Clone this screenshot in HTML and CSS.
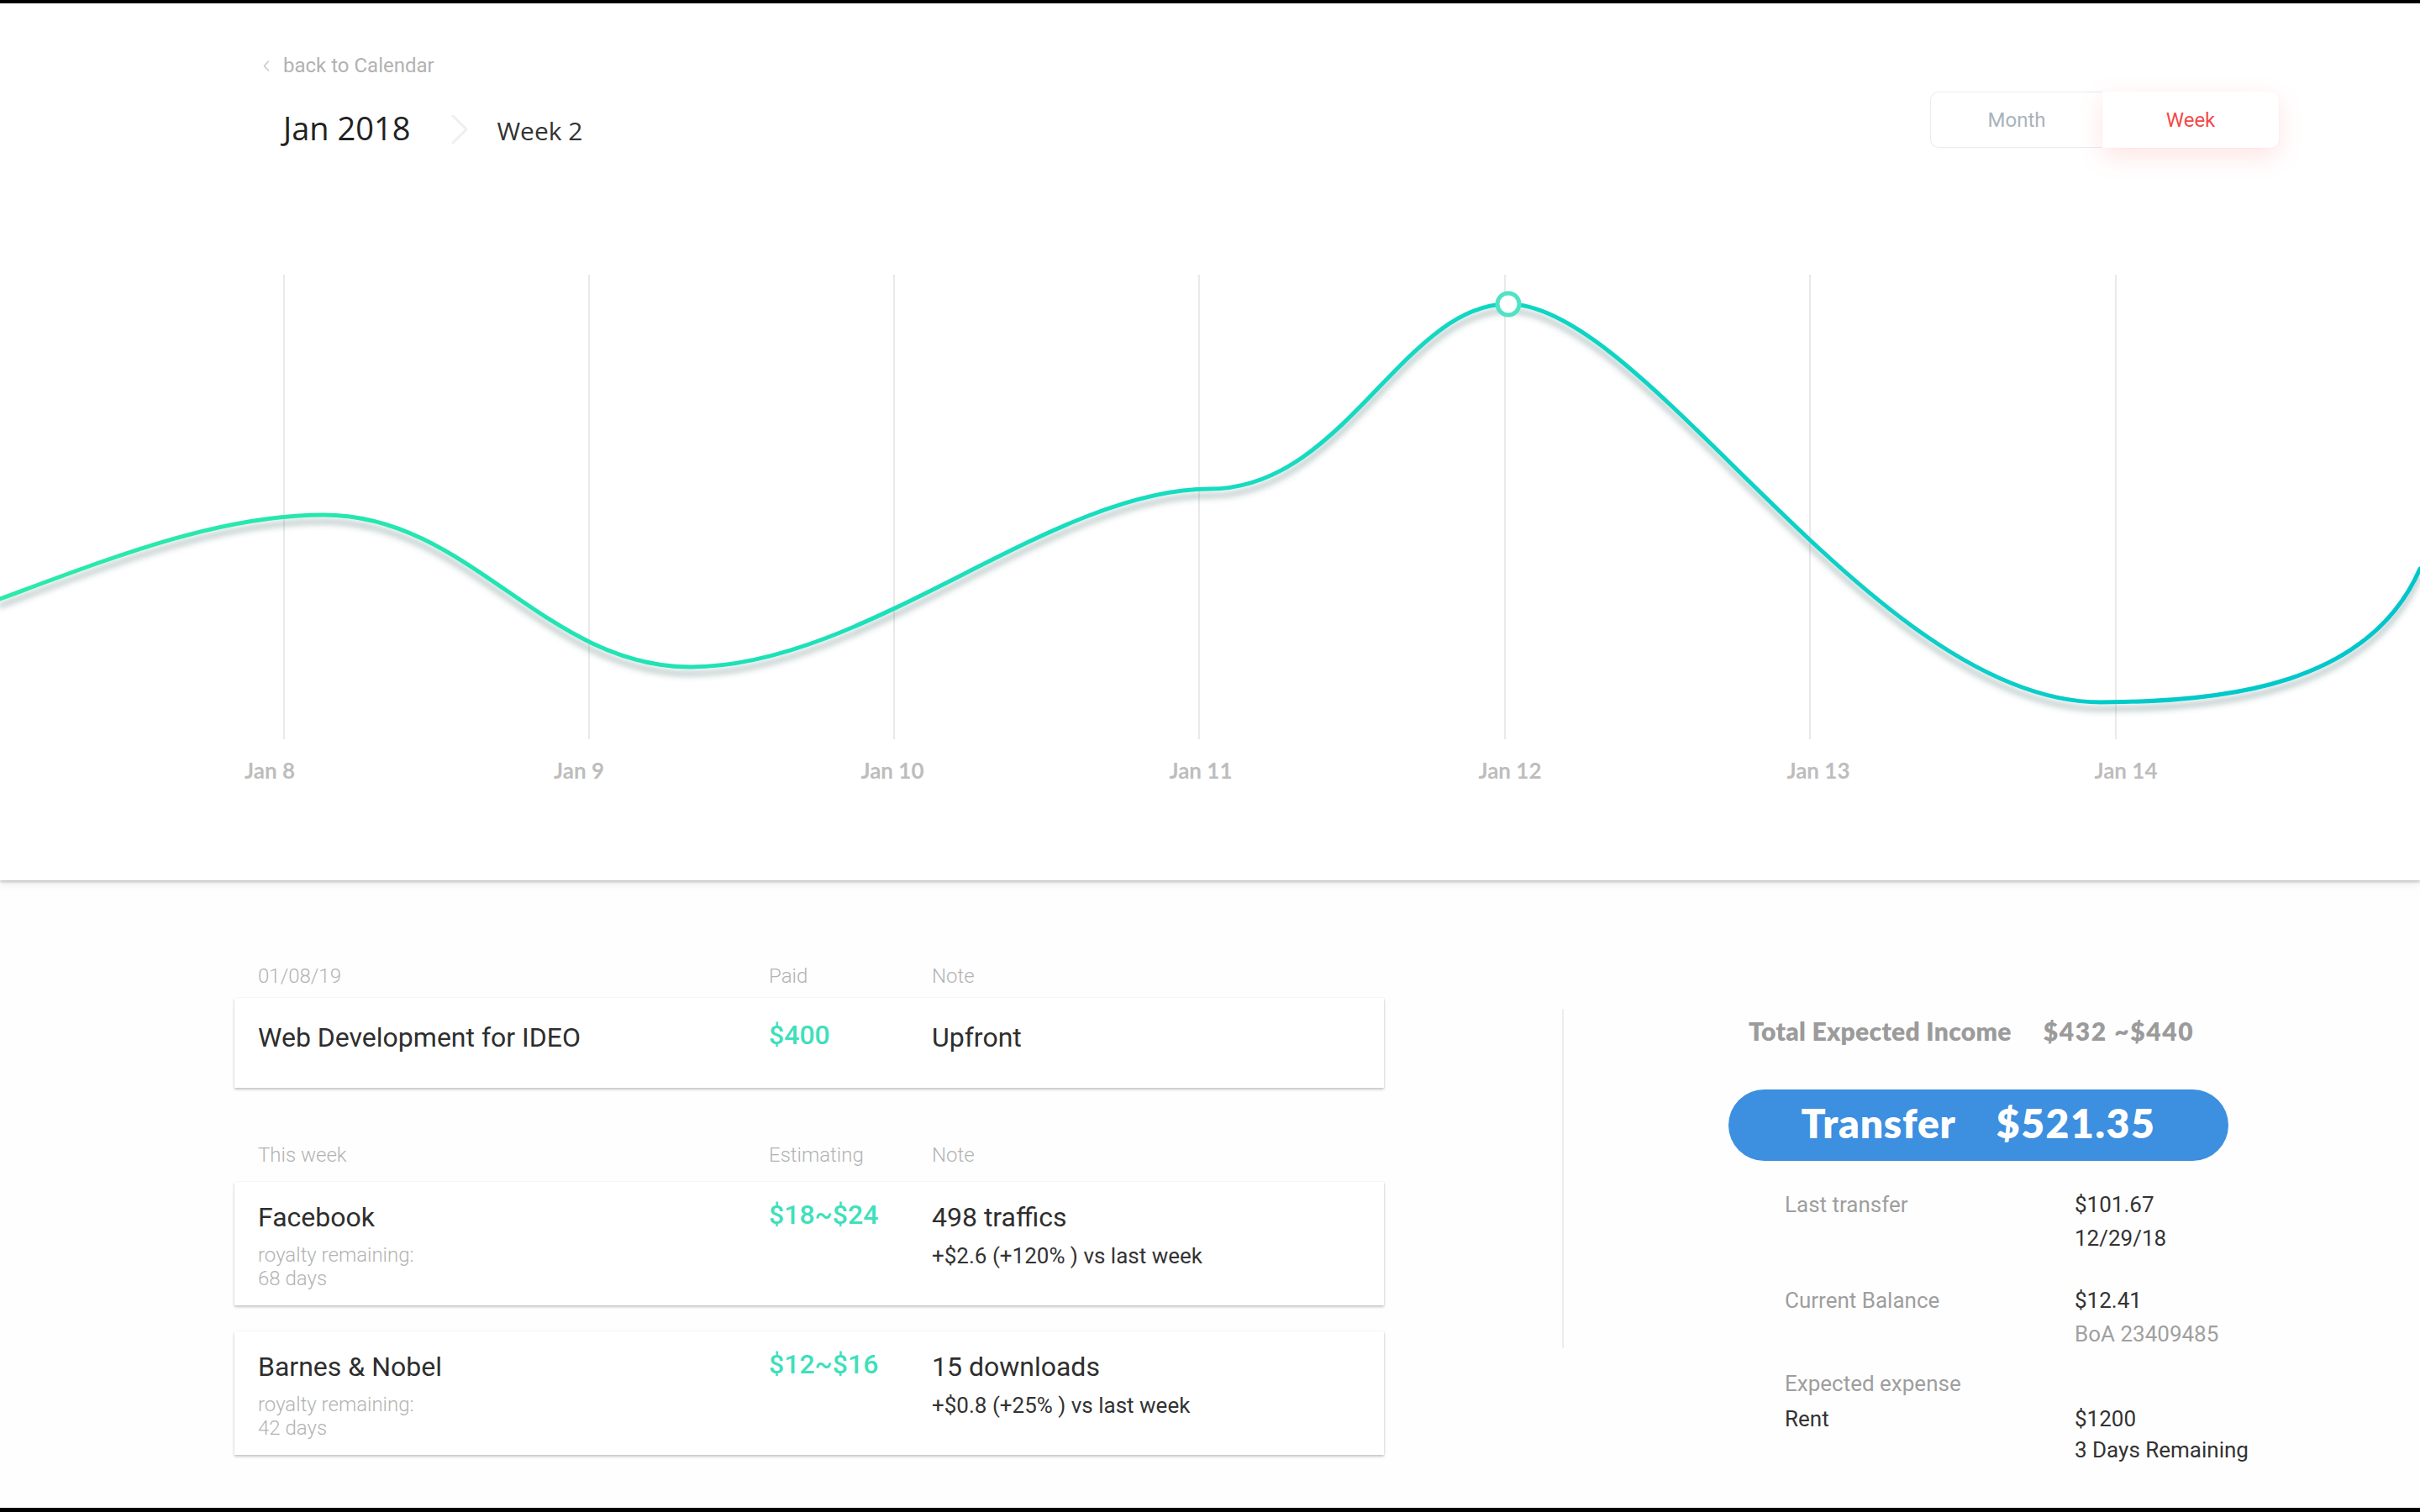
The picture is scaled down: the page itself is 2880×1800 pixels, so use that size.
FILE: index.html
```html
<!DOCTYPE html>
<html lang="en">
<head>
<meta charset="utf-8">
<title>Week 2 · Jan 2018</title>
<link rel="stylesheet" href="styles.css">
</head>
<body>
<div class="page">
  <section class="top-panel">
    <header class="header">
      <div class="crumbs">
        <a class="back" href="#">
          <svg class="back-icon" viewBox="0 0 8 13"><path d="M6.5 1 L1.5 6.5 L6.5 12" fill="none" stroke="#c6cacd" stroke-width="1.6" stroke-linecap="round" stroke-linejoin="round"/></svg>
          <span>back to Calendar</span>
        </a>
        <div class="title-row">
          <span class="month">Jan 2018</span>
          <svg class="sep" viewBox="0 0 20 34"><path d="M2 1 L18 17 L2 33" fill="none" stroke="#efefef" stroke-width="3" stroke-linecap="round" stroke-linejoin="round"/></svg>
          <span class="week">Week 2</span>
        </div>
      </div>
      <div class="toggle">
        <button class="seg seg-month">Month</button>
        <button class="seg seg-week">Week</button>
      </div>
    </header>
    <svg class="chart" viewBox="0 200 2880 848" width="2880" height="848">
      <defs>
        <linearGradient id="lineGrad" gradientUnits="userSpaceOnUse" x1="0" y1="0" x2="2880" y2="0">
          <stop offset="0" stop-color="#2deaa9"/>
          <stop offset="0.5" stop-color="#16dcc0"/>
          <stop offset="1" stop-color="#00c6cc"/>
        </linearGradient>
        <filter id="lineShadow" x="-5%" y="-30%" width="110%" height="160%">
          <feDropShadow dx="0" dy="8" stdDeviation="3.5" flood-color="#3a5e5e" flood-opacity="0.4"/>
        </filter>
      </defs>
      <g class="grid">
        <line x1="338" y1="327" x2="338" y2="880"/>
        <line x1="701" y1="327" x2="701" y2="880"/>
        <line x1="1064" y1="327" x2="1064" y2="880"/>
        <line x1="1427" y1="327" x2="1427" y2="880"/>
        <line x1="1791" y1="327" x2="1791" y2="880"/>
        <line x1="2154" y1="327" x2="2154" y2="880"/>
        <line x1="2518" y1="327" x2="2518" y2="880"/>
      </g>
      <path class="curve" filter="url(#lineShadow)" d="M0,713 C130,665 260,613 385,613 C560,613 647,794 822,794 C1030,794 1250,582 1440,582 C1600,582 1670,362 1795,362 C1960,362 2230,836 2500,836 C2650,836 2820,815 2880,677"/>
      <circle class="marker" cx="1795" cy="362" r="13"/>
      <g class="axis">
        <text x="321" y="927">Jan 8</text>
        <text x="689" y="927">Jan 9</text>
        <text x="1062" y="927">Jan 10</text>
        <text x="1429" y="927">Jan 11</text>
        <text x="1797" y="927">Jan 12</text>
        <text x="2164" y="927">Jan 13</text>
        <text x="2530" y="927">Jan 14</text>
      </g>
    </svg>
  </section>

  <section class="bottom">
    <div class="ledger">
      <div class="ledger-head"><span>01/08/19</span><span>Paid</span><span>Note</span></div>
      <div class="card card-paid">
        <div class="c-name">Web Development for IDEO</div>
        <div class="c-amt">$400</div>
        <div class="c-note">Upfront</div>
      </div>

      <div class="ledger-head second"><span>This week</span><span>Estimating</span><span>Note</span></div>
      <div class="card card-est">
        <div class="c-name">Facebook
          <div class="c-sub">royalty remaining:<br>68 days</div>
        </div>
        <div class="c-amt">$18~$24</div>
        <div class="c-note">498 traffics
          <div class="c-delta">+$2.6 (+120% ) vs last week</div>
        </div>
      </div>
      <div class="card card-est">
        <div class="c-name">Barnes &amp; Nobel
          <div class="c-sub">royalty remaining:<br>42 days</div>
        </div>
        <div class="c-amt">$12~$16</div>
        <div class="c-note">15 downloads
          <div class="c-delta">+$0.8 (+25% ) vs last week</div>
        </div>
      </div>
    </div>

    <div class="divider"></div>

    <aside class="summary">
      <div class="total"><span>Total Expected Income</span><span class="total-value">$432 ~$440</span></div>
      <button class="transfer"><span>Transfer</span><span class="transfer-value">$521.35</span></button>
      <div class="details">
        <div class="d-row">
          <div class="d-label">Last transfer</div>
          <div class="d-value">$101.67<br>12/29/18</div>
        </div>
        <div class="d-row row-balance">
          <div class="d-label">Current Balance</div>
          <div class="d-value">$12.41<br><span class="muted">BoA 23409485</span></div>
        </div>
        <div class="d-row row-expense">
          <div class="d-label">Expected expense</div>
        </div>
        <div class="d-row row-rent">
          <div class="d-item">Rent</div>
          <div class="d-value">$1200<br>3 Days Remaining</div>
        </div>
      </div>
    </aside>
  </section>
</div>
</body>
</html>
```

FILE: styles.css
```css
html, body {
  margin: 0;
  padding: 0;
}

body {
  background: #fefefe;
  font-family: Roboto, "Noto Sans", Arial, sans-serif;
  color: #333;
}

.page {
  width: 2880px;
  height: 1800px;
  box-sizing: border-box;
  border-top: 4px solid #000;
  border-bottom: 5px solid #000;
  display: flex;
  flex-direction: column;
  overflow: hidden;
}

/* ---------- top panel ---------- */
.top-panel {
  flex: none;
  height: 1044px;
  background: #fff;
  position: relative;
  z-index: 1;
  box-shadow: 0 2px 3px rgba(0, 0, 0, 0.2), 0 5px 10px rgba(0, 0, 0, 0.07);
}

.header {
  height: 196px;
  box-sizing: border-box;
  padding: 59px 168px 0 313px;
  display: flex;
  justify-content: space-between;
  align-items: flex-start;
}

.crumbs {
  display: flex;
  flex-direction: column;
}

.back {
  display: flex;
  align-items: center;
  gap: 16px;
  height: 30px;
  font-size: 24px;
  line-height: 30px;
  color: #b2b2b2;
  text-decoration: none;
}

.back-icon {
  width: 8px;
  height: 13px;
  flex: none;
}

.title-row {
  display: flex;
  align-items: baseline;
  margin-top: 34px;
  padding-left: 24px;
}

.month {
  font-family: "Open Sans", Roboto, sans-serif;
  font-size: 38px;
  line-height: 50px;
  color: #222;
}

.sep {
  width: 20px;
  height: 34px;
  align-self: center;
  margin: 0 34px 0 49px;
}

.week {
  font-family: "Open Sans", Roboto, sans-serif;
  font-size: 30px;
  line-height: 50px;
  color: #333;
}

.toggle {
  display: flex;
  margin-top: 46px;
  height: 67px;
}

.seg {
  flex: none;
  display: flex;
  align-items: center;
  justify-content: center;
  height: 67px;
  box-sizing: border-box;
  padding: 0;
  background: #fff;
  border: 0;
  font-family: Roboto, sans-serif;
  font-size: 24px;
  cursor: pointer;
}

.seg-month {
  width: 205px;
  border: 1.5px solid #eaecee;
  border-right: 0;
  border-radius: 10px 0 0 10px;
  color: #a9b3bb;
}

.seg-week {
  width: 210px;
  border-radius: 0 10px 10px 0;
  color: #f24a4a;
  box-shadow: 0 10px 30px rgba(255, 90, 90, 0.16), 0 0 3px rgba(255, 120, 120, 0.08);
}

/* ---------- chart ---------- */
.chart {
  display: block;
  width: 2880px;
  height: 848px;
}

.grid line {
  stroke: #e2e2e2;
  stroke-width: 1.5;
}

.curve {
  fill: none;
  stroke: url(#lineGrad);
  stroke-width: 5;
  stroke-linecap: round;
}

.marker {
  fill: #fff;
  stroke: #4fe3c4;
  stroke-width: 5;
}

.axis text {
  font-family: Lato, "Open Sans", sans-serif;
  font-weight: 700;
  font-size: 26px;
  fill: #bdbdbd;
  text-anchor: middle;
}

/* ---------- bottom ---------- */
.bottom {
  flex: 1;
  display: flex;
  align-items: flex-start;
  padding-left: 279px;
}

.ledger {
  flex: none;
  width: 1368px;
  margin-top: 99px;
}

.ledger-head {
  display: grid;
  grid-template-columns: 608px 194px 1fr;
  padding-left: 28px;
  font-size: 24px;
  line-height: 30px;
  font-weight: 300;
  color: #b3b3b3;
}

.ledger-head.second {
  margin-top: 65px;
}

.card {
  display: grid;
  grid-template-columns: 608px 194px 1fr;
  padding: 0 28px;
  background: #fff;
  box-shadow: 0 2px 3px rgba(0, 0, 0, 0.22), 0 0 2px rgba(0, 0, 0, 0.08);
}

.card-paid {
  margin-top: 11px;
  height: 107px;
  box-sizing: border-box;
  padding-top: 27px;
}

.card-est {
  margin-top: 17px;
  padding-top: 22px;
  padding-bottom: 18px;
}

.card-est + .card-est {
  margin-top: 31px;
}

.c-name,
.c-amt,
.c-note {
  font-size: 32px;
  line-height: 40px;
  color: #2e2e2e;
}

.c-amt {
  color: #3fe0bb;
  font-weight: 500;
  margin-top: -3px;
}

.c-sub {
  margin-top: 11px;
  font-size: 24px;
  line-height: 28px;
  font-weight: 300;
  color: #b3b3b3;
}

.c-delta {
  margin-top: 9px;
  font-size: 26px;
  line-height: 34px;
  color: #333;
}

.divider {
  flex: none;
  width: 2px;
  height: 404px;
  margin: 153px 0 0 212px;
  background: #ededed;
}

.summary {
  flex: none;
  width: 595px;
  margin: 161px 0 0 196px;
}

.total {
  display: flex;
  gap: 38px;
  margin-left: 24px;
  font-family: Lato, "Open Sans", sans-serif;
  font-weight: 800;
  font-size: 30px;
  line-height: 36px;
  letter-spacing: 0.3px;
  color: #9b9b9b;
  white-space: nowrap;
}

.total-value {
  letter-spacing: 1.6px;
}

.transfer {
  margin-top: 52px;
  width: 595px;
  height: 85px;
  box-sizing: border-box;
  padding: 0 0 6px;
  border: 0;
  border-radius: 43px;
  background: #3d8fe0;
  color: #fff;
  display: flex;
  align-items: center;
  justify-content: center;
  gap: 48px;
  font-family: Lato, "Open Sans", sans-serif;
  font-weight: 800;
  font-size: 48px;
  letter-spacing: 0.8px;
  cursor: pointer;
}

.transfer-value {
  letter-spacing: 1.6px;
}

.details {
  margin: 32px 0 0 67px;
  font-size: 26px;
  line-height: 40px;
}

.d-row {
  display: grid;
  grid-template-columns: 345px 1fr;
  white-space: nowrap;
}

.d-label {
  color: #9e9e9e;
}

.d-value,
.d-item {
  color: #333;
}

.muted {
  color: #a0a0a0;
}

.row-balance {
  margin-top: 34px;
}

.row-expense {
  margin-top: 19px;
}

.row-rent {
  margin-top: 4px;
  line-height: 37px;
}
```
